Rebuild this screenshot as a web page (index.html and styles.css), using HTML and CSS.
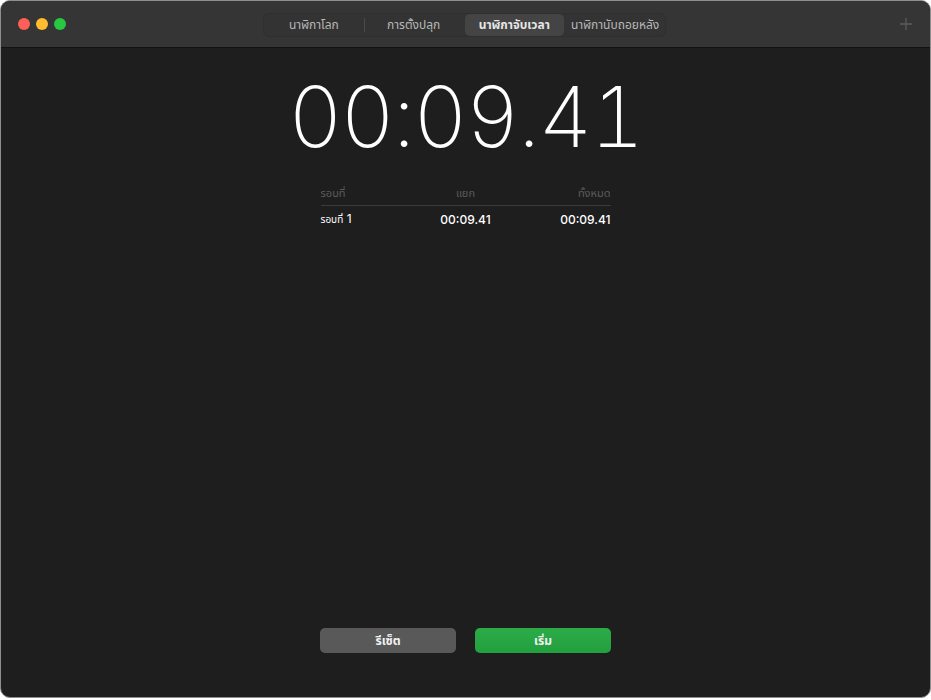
FILE: index.html
```html
<!DOCTYPE html>
<html lang="th">
<head>
<meta charset="utf-8">
<link rel="stylesheet" href="styles.css">
</head>
<body>
<div class="window">
  <header class="titlebar">
    <div class="lights">
      <span class="light red"></span>
      <span class="light yellow"></span>
      <span class="light green"></span>
    </div>
    <nav class="segments">
      <span class="seg">นาฬิกาโลก</span>
      <span class="seg sep">การตั้งปลุก</span>
      <span class="seg active">นาฬิกาจับเวลา</span>
      <span class="seg">นาฬิกานับถอยหลัง</span>
    </nav>
    <svg class="plus" width="14" height="14" viewBox="0 0 14 14"><path d="M7 1v12M1 7h12" stroke="#5c5c5c" stroke-width="1.3"/></svg>
  </header>
  <main class="content">
    <div class="time">00:09.41</div>
    <div class="laps">
      <div class="lap-row head">
        <span class="c1">รอบที่</span>
        <span class="c2">แยก</span>
        <span class="c3">ทั้งหมด</span>
      </div>
      <div class="lap-row">
        <span class="c1"><span class="lbl">รอบที่</span> 1</span>
        <span class="c2">00:09.41</span>
        <span class="c3">00:09.41</span>
      </div>
    </div>
    <div class="spacer"></div>
    <div class="buttons">
      <button class="btn reset">รีเซ็ต</button>
      <button class="btn start">เริ่ม</button>
    </div>
  </main>
</div>
</body>
</html>
```

FILE: styles.css
```css
html, body {
  margin: 0;
  padding: 0;
  background: #ffffff;
}
body {
  font-family: "Noto Sans Thai", "Noto Sans", "Inter", sans-serif;
  width: 931px;
  height: 700px;
}
.window {
  box-sizing: border-box;
  width: 931px;
  height: 698px;
  border: 1px solid #8e8e8e;
  border-radius: 10px;
  overflow: hidden;
  display: flex;
  flex-direction: column;
  background: #1e1e1e;
}
.titlebar {
  height: 46px;
  flex: none;
  background: #353535;
  border-bottom: 1px solid #111;
  display: flex;
  align-items: center;
  position: relative;
}
.lights {
  display: flex;
  gap: 6px;
  padding-left: 17px;
}
.light {
  width: 12px;
  height: 12px;
  border-radius: 50%;
  display: block;
}
.red { background: #fe5f57; }
.yellow { background: #febc2e; }
.green { background: #28c840; }
.segments {
  margin-left: 197px;
  margin-top: 2px;
  width: 403px;
  height: 24px;
  box-sizing: border-box;
  border: 1px solid #2f2f2f;
  border-radius: 6px;
  background: #333333;
  display: flex;
  align-items: stretch;
  padding: 0;
}
.seg {
  flex: 1;
  display: flex;
  align-items: center;
  justify-content: center;
  font-size: 12px;
  color: #b8b8b8;
  white-space: nowrap;
  border-radius: 5px;
  position: relative;
}
.seg.sep::before {
  content: "";
  position: absolute;
  left: 0;
  top: 4px;
  bottom: 4px;
  width: 1px;
  background: #4a4a4a;
}
.seg.active {
  background: #444444;
  color: #e6e6e6;
  font-weight: 700;
  margin: 0 1px;
}
.plus {
  position: absolute;
  right: 17px;
  top: 16px;
}
.content {
  flex: 1;
  display: flex;
  flex-direction: column;
  align-items: center;
}
.time {
  font-family: "Inter", sans-serif;
  font-weight: 200;
  font-size: 84px;
  color: #ffffff;
  line-height: 1;
  margin-top: 27px;
  letter-spacing: -2px;
  font-variant-numeric: tabular-nums;
}
.laps {
  width: 290px;
  margin-top: 23px;
}
.lap-row {
  display: grid;
  grid-template-columns: 1fr 1fr 1fr;
  align-items: center;
  font-size: 12px;
  color: #ffffff;
  height: 26px;
}
.lap-row.head {
  color: #5c5c5c;
  font-size: 11px;
  height: 23px;
  border-bottom: 1px solid #3c3c3c;
}
.lap-row .c2, .lap-row .c3 {
  font-family: "Inter", sans-serif;
  font-weight: 500;
}
.lap-row.head .c2, .lap-row.head .c3 {
  font-family: "Noto Sans Thai", "Noto Sans", sans-serif;
  font-weight: 400;
}
.c1 { text-align: left; }
.c2 { text-align: center; }
.c3 { text-align: right; }
.c1 .lbl { font-size: 10px; }
.lap-row .c1 { font-family: "Inter", "Noto Sans Thai", sans-serif; }
.spacer { flex: 1; }
.buttons {
  display: flex;
  gap: 19px;
  margin-bottom: 44px;
}
.btn {
  width: 136px;
  height: 25px;
  border: none;
  border-radius: 5px;
  color: #f2f2f2;
  font-family: "Noto Sans Thai", "Noto Sans", sans-serif;
  font-size: 12px;
  font-weight: 700;
  padding: 0;
}
.reset { background: #595959; }
.start { background: linear-gradient(#2bab47, #23a03e); }
```
